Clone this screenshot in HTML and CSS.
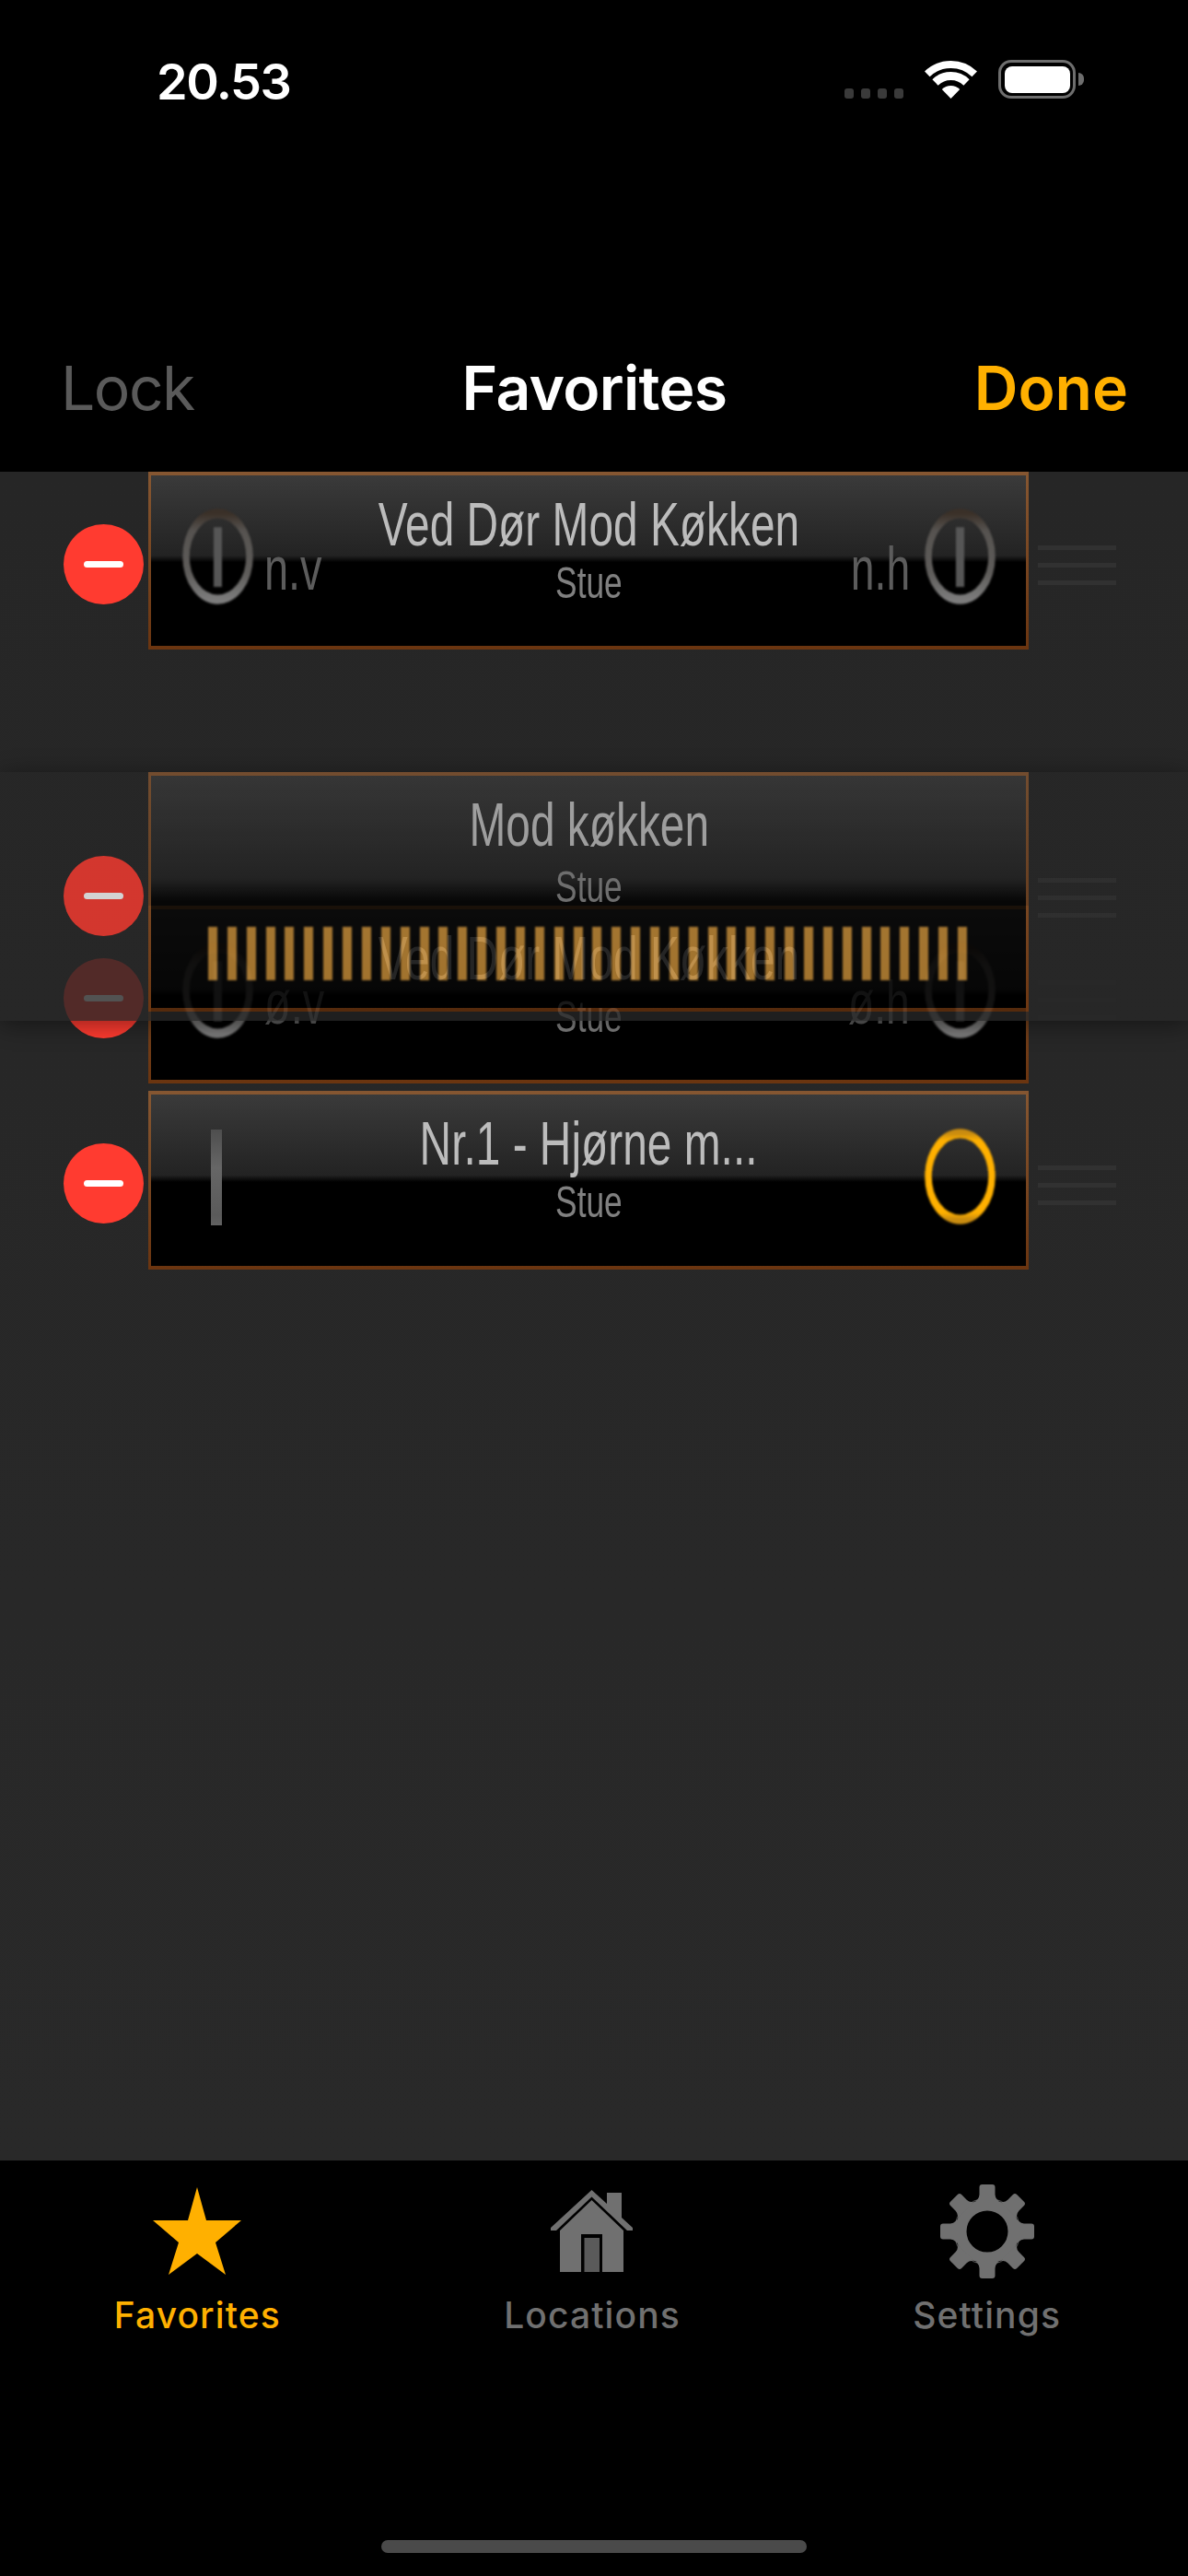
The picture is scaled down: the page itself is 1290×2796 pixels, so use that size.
FILE: index.html
```html
<!DOCTYPE html>
<html lang="da">
<head>
<meta charset="utf-8">
<title>Favorites</title>
<link rel="stylesheet" href="styles.css">
</head>
<body>
<svg class="defs" aria-hidden="true">
  <defs>
    <linearGradient id="ringGray" x1="0" y1="0" x2="0" y2="1">
      <stop offset="0" stop-color="#3a3028"/>
      <stop offset=".2" stop-color="#565350"/>
      <stop offset=".7" stop-color="#5f5d5b"/>
      <stop offset="1" stop-color="#7c7c7c"/>
    </linearGradient>
    <linearGradient id="ringOrange" x1="0" y1="0" x2="0" y2="1">
      <stop offset="0" stop-color="#c98c10"/>
      <stop offset=".08" stop-color="#ffb000"/>
      <stop offset=".92" stop-color="#ffb000"/>
      <stop offset="1" stop-color="#c98c10"/>
    </linearGradient>
    <symbol id="ring-off" viewBox="0 0 77 77" preserveAspectRatio="none">
      <circle cx="38.5" cy="38.5" r="34.5" fill="none" stroke="url(#ringGray)" stroke-width="7.5"/>
      <rect x="34" y="15" width="9" height="48" fill="#565656"/>
    </symbol>
    <symbol id="ring-on" viewBox="0 0 77 77" preserveAspectRatio="none">
      <circle cx="38.5" cy="38.5" r="34.5" fill="none" stroke="url(#ringOrange)" stroke-width="7.5"/>
    </symbol>
  </defs>
</svg>
<div class="screen">
  <header class="top">
    <div class="status">
      <span class="time">20.53</span>
      <div class="status-icons">
        <div class="signal"><i></i><i></i><i></i><i></i></div>
        <svg class="wifi" viewBox="0 0 57 42">
          <path d="M2.8 15.4A37 37 0 0 1 54.2 15.4" fill="none" stroke="#fff" stroke-width="8"/>
          <path d="M11.5 24.4A24.5 24.5 0 0 1 45.5 24.4" fill="none" stroke="#fff" stroke-width="9"/>
          <path d="M28.5 42L18.8 31.9A14 14 0 0 1 38.2 31.9Z" fill="#fff"/>
        </svg>
        <div class="battery"><div class="battery-body"><div class="battery-fill"></div></div><div class="battery-nub"></div></div>
      </div>
    </div>
    <nav class="nav">
      <span class="nav-lock">Lock</span>
      <span class="nav-title">Favorites</span>
      <span class="nav-done">Done</span>
    </nav>
  </header>

  <main class="list">
    <div class="row">
      <div class="minus"><i></i></div>
      <div class="card">
        <div class="head">
          <div class="side">
            <svg class="ring"><use href="#ring-off"/></svg>
            <span class="label label-l">n.v</span>
          </div>
          <div class="center">
            <span class="title">Ved Dør Mod Køkken</span>
            <span class="sub">Stue</span>
          </div>
          <div class="side side-r">
            <span class="label label-r">n.h</span>
            <svg class="ring"><use href="#ring-off"/></svg>
          </div>
        </div>
      </div>
      <div class="handle"><i></i><i></i><i></i></div>
    </div>

    <div class="placeholder"></div>

    <div class="row">
      <div class="minus"><i></i></div>
      <div class="card">
        <div class="head">
          <div class="side">
            <svg class="ring"><use href="#ring-off"/></svg>
            <span class="label label-l">ø.v</span>
          </div>
          <div class="center">
            <span class="title">Ved Dør Mod Køkken</span>
            <span class="sub">Stue</span>
          </div>
          <div class="side side-r">
            <span class="label label-r">ø.h</span>
            <svg class="ring"><use href="#ring-off"/></svg>
          </div>
        </div>
      </div>
      <div class="handle"><i></i><i></i><i></i></div>
    </div>

    <div class="row">
      <div class="minus"><i></i></div>
      <div class="card">
        <div class="head">
          <div class="side"><div class="slider"></div></div>
          <div class="center">
            <span class="title">Nr.1 - Hjørne m...</span>
            <span class="sub">Stue</span>
          </div>
          <div class="side side-r">
            <svg class="ring ring-on"><use href="#ring-on"/></svg>
          </div>
        </div>
      </div>
      <div class="handle"><i></i><i></i><i></i></div>
    </div>

    <div class="row row-dragged">
      <div class="minus"><i></i></div>
      <div class="card card-tall">
        <div class="head head-tall">
          <div class="side"></div>
          <div class="center">
            <span class="title">Mod køkken</span>
            <span class="sub">Stue</span>
          </div>
          <div class="side side-r"></div>
        </div>
        <div class="levels"></div>
      </div>
      <div class="handle"><i></i><i></i><i></i></div>
    </div>
  </main>

  <footer class="tabbar">
    <div class="tabs">
      <div class="tab tab-active">
        <div class="tab-icon">
          <svg width="96" height="96" viewBox="0 0 96 96"><polygon fill="#ffb000" points="48,0 58,36 96,36 68,60 79,95 48,72 17,95 28,60 0,36 38,36"/></svg>
        </div>
        <span class="tab-label">Favorites</span>
      </div>
      <div class="tab">
        <div class="tab-icon">
          <svg width="90" height="90" viewBox="0 0 90 90">
            <path fill="#707070" d="M44.5 0L61 15V3H77V30L89 41V44H83L44.5 7.5L6 44H0V41Z"/>
            <path fill="#707070" d="M44.5 11L79 44V89H56V48H33V89H10V44Z"/>
            <rect x="36.5" y="52" width="16.5" height="37" fill="#5a5a5a"/>
          </svg>
        </div>
        <span class="tab-label">Locations</span>
      </div>
      <div class="tab">
        <div class="tab-icon">
          <svg width="102" height="102" viewBox="-51 -51 102 102">
            <defs>
              <path id="gear-tooth" d="M-16-33Q-9-33-8.5-40V-48Q-8.5-51-5.5-51H5.5Q8.5-51 8.5-48V-40Q9-33 16-33Z"/>
            </defs>
            <circle r="28.75" fill="none" stroke="#707070" stroke-width="12.5"/>
            <g fill="#707070">
              <use href="#gear-tooth"/>
              <use href="#gear-tooth" transform="rotate(45)"/>
              <use href="#gear-tooth" transform="rotate(90)"/>
              <use href="#gear-tooth" transform="rotate(135)"/>
              <use href="#gear-tooth" transform="rotate(180)"/>
              <use href="#gear-tooth" transform="rotate(225)"/>
              <use href="#gear-tooth" transform="rotate(270)"/>
              <use href="#gear-tooth" transform="rotate(315)"/>
            </g>
          </svg>
        </div>
        <span class="tab-label">Settings</span>
      </div>
    </div>
    <div class="home-indicator"></div>
  </footer>
</div>
</body>
</html>
```
FILE: styles.css
```css
* { box-sizing: border-box; }
html, body { margin: 0; padding: 0; background: #000; }
.defs { position: absolute; width: 0; height: 0; }
.screen {
  width: 1290px;
  height: 2796px;
  display: flex;
  flex-direction: column;
  overflow: hidden;
  font-family: Inter, "Liberation Sans", sans-serif;
}

/* header */
.top { height: 511.67px; background: #000; display: flex; flex-direction: column; flex: none; }
.status {
  display: flex;
  justify-content: space-between;
  align-items: flex-end;
  padding: 65px 113px 0 170px;
  height: 107px;
}
.time { color: #fff; font-size: 54px; font-weight: 600; line-height: 42px; letter-spacing: -1.5px; margin-bottom: -3px; }
.status-icons { display: flex; align-items: flex-end; height: 42px; }
.signal { display: flex; gap: 8px; margin-right: 23px; }
.signal i { width: 10px; height: 11px; border-radius: 3px; background: #3a3a3a; }
.wifi { width: 57px; height: 42px; margin-right: 23px; }
.battery { display: flex; align-items: center; height: 42px; }
.battery-body {
  width: 84px;
  height: 42px;
  border: 3.5px solid #6e6e6e;
  border-radius: 14px;
  padding: 3.5px;
}
.battery-fill { width: 100%; height: 100%; background: #fff; border-radius: 8px; }
.battery-nub { width: 6px; height: 14px; margin-left: 3px; background: #6e6e6e; border-radius: 0 7px 7px 0; }

.nav {
  display: grid;
  grid-template-columns: 1fr auto 1fr;
  align-items: baseline;
  padding: 0 65px 0 66px;
  margin-top: 279px;
  font-size: 66px;
  line-height: 70px;
}
.nav-lock { color: #5a5a5a; font-weight: 400; letter-spacing: -1.5px; }
.nav-title { color: #fff; font-weight: 600; letter-spacing: -.7px; }
.nav-done { color: #ffb000; font-weight: 600; justify-self: end; }

/* list */
.list { flex: 1; background: linear-gradient(#262626, #292929); position: relative; }
.row {
  height: 201.33px;
  padding-left: 69px;
  display: flex;
  align-items: center;
}
.placeholder { height: 270px; }
.row-dragged {
  position: absolute;
  left: 0;
  right: 0;
  top: 326.33px;
  height: 270px;
  background: #272727;
  opacity: .8;
  box-shadow: 0 4px 26px rgba(0, 0, 0, .55);
}
.minus {
  width: 87px;
  height: 87px;
  border-radius: 50%;
  background: #ff3b30;
  display: flex;
  align-items: center;
  justify-content: center;
  flex: none;
}
.minus i { width: 43px; height: 7px; border-radius: 4px; background: #fff; }
.card {
  width: 956px;
  height: 193.33px;
  margin-left: 5px;
  align-self: flex-start;
  flex: none;
  display: flex;
  flex-direction: column;
  border-style: solid;
  border-width: 4px 3px;
  border-image: linear-gradient(#855631, #6b3510) 1;
  background: linear-gradient(#3a3a3a 0, #232323 47%, #000 51%);
}
.card-tall {
  height: 260px;
  background: linear-gradient(#3a3a3a 0, #232323 44%, #000 54%);
}
.head { display: flex; padding: 0 33px 0 34px; }
.side { width: 200px; flex: none; display: flex; align-items: flex-start; }
.side-r { justify-content: flex-end; }
.ring { width: 77px; height: 104px; margin-top: 36px; flex: none; filter: blur(.8px); }
.ring-on { margin-top: 37px; }
.label {
  font-family: "Liberation Sans", Arial, sans-serif;
  font-size: 67px;
  line-height: 67px;
  margin-top: 67px;
  color: #5c5c5c;
  white-space: nowrap;
}
.label-l { margin-left: 12px; transform: scaleX(.7); transform-origin: left center; }
.label-r { margin-right: 16px; transform: scaleX(.69); transform-origin: right center; }
.center {
  flex: 1;
  min-width: 0;
  display: flex;
  flex-direction: column;
  align-items: center;
  padding-top: 20px;
  font-family: "Liberation Sans", Arial, sans-serif;
  white-space: nowrap;
}
.title { font-size: 66px; line-height: 66px; color: #bcbcbc; transform: scaleX(.725); }
.sub { font-size: 49px; line-height: 49px; margin-top: 6px; color: #808080; transform: scaleX(.72); }
.head-tall .sub { margin-top: 10.5px; }
.slider {
  width: 12px;
  height: 104px;
  margin: 38px 0 0 31px;
  background: linear-gradient(#4e4e4e, #666 40%, #5a5a5a 90%, #626262);
  filter: blur(.6px);
}
.levels {
  width: 826px;
  height: 58px;
  margin: 18.5px 0 0 62px;
  background: repeating-linear-gradient(90deg, #c08630 0 10px, transparent 10px 20.87px);
  filter: blur(1.2px);
}
.handle {
  width: 85px;
  margin: 3px 0 0 10px;
  display: flex;
  flex-direction: column;
  gap: 14px;
  flex: none;
}
.handle i { height: 5px; background: #313131; }

/* tab bar */
.tabbar { height: 451px; flex: none; background: #000; display: flex; flex-direction: column; }
.tabs {
  display: grid;
  grid-template-columns: repeat(3, 1fr);
  padding: 22px 4px 0 0;
}
.tab { display: flex; flex-direction: column; align-items: center; }
.tab-icon { height: 110px; display: flex; align-items: center; justify-content: center; }
.tab-label { font-size: 39px; line-height: 40px; margin-top: 16px; color: #707070; font-weight: 500; letter-spacing: 1.1px; }
.tab-active .tab-label { color: #ffb000; }
.home-indicator {
  width: 462px;
  height: 14px;
  border-radius: 7px;
  background: #4a4a4a;
  margin: auto auto 25px;
}
```
